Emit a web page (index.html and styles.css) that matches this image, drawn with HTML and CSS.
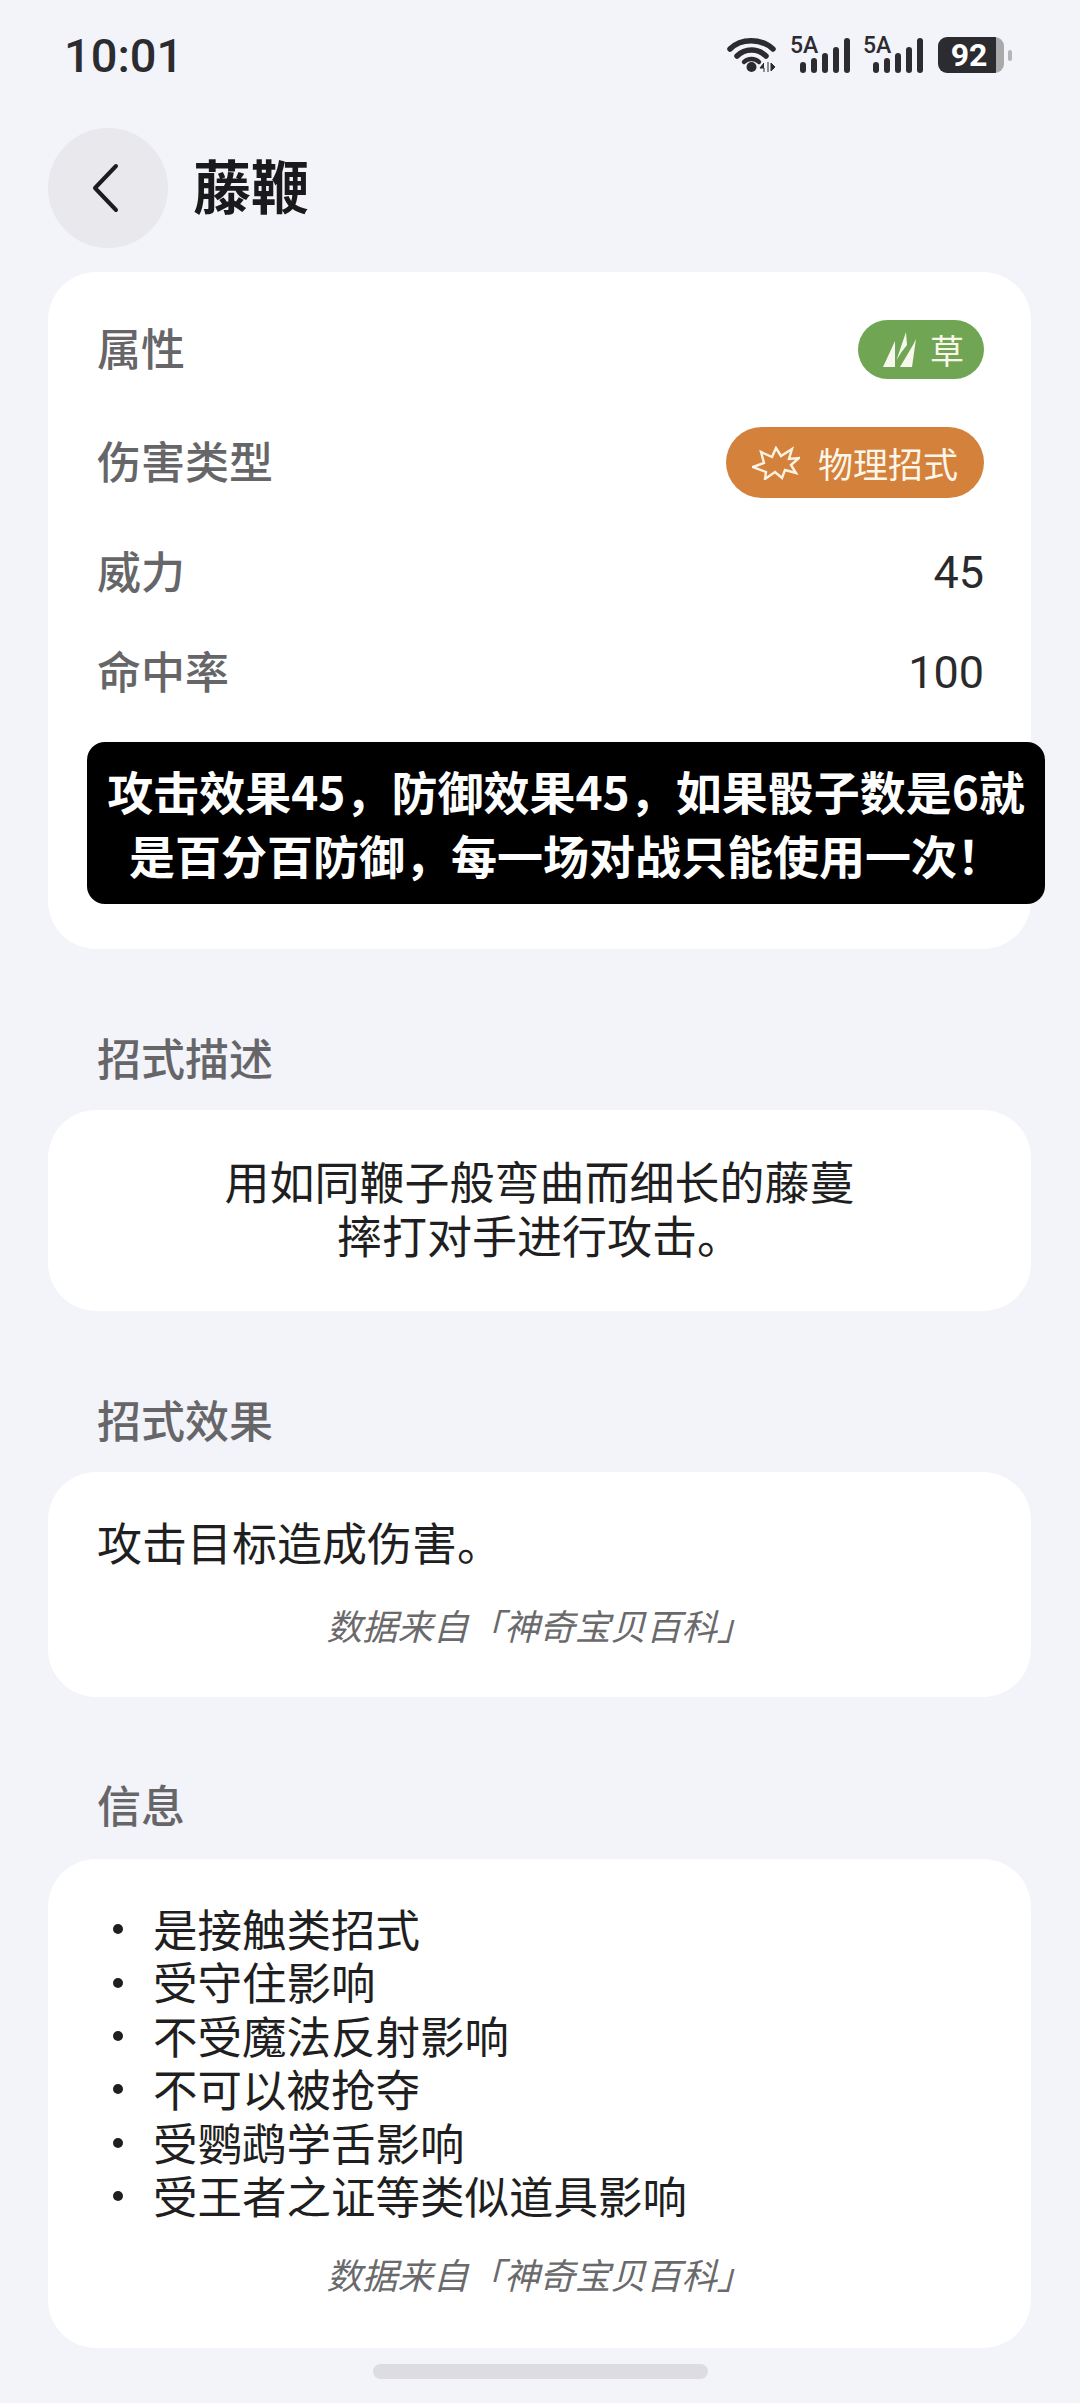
FILE: index.html
```html
<!DOCTYPE html>
<html lang="zh-Hans">
<head>
  <meta charset="UTF-8">
  <meta name="viewport" content="width=device-width, initial-scale=1.0">
  <title>藤鞭</title>
  <link rel="stylesheet" href="styles.css">
</head>
<body>

  <div class="status-bar">
    <span class="time">10:01</span>
    <div class="status-icons">
      <svg class="wifi" width="50" height="36" viewBox="0 0 50 36">
        <path d="M3 12 C14 1 34 1 46 12" fill="none" stroke="#2b2b30" stroke-width="5.5" stroke-linecap="round"/>
        <path d="M10 19 C18 11 31 11 39 19" fill="none" stroke="#2b2b30" stroke-width="5.5" stroke-linecap="round"/>
        <path d="M17 25 C21 21 28 21 32 25" fill="none" stroke="#2b2b30" stroke-width="4.5" stroke-linecap="round"/>
        <circle cx="24.5" cy="30" r="5" fill="#2b2b30"/>
        <path d="M37 26 L33 31 H37 V35 M41 25 V35 M44 26 L48 30 L44 34 Z" fill="#2b2b30" stroke="#2b2b30" stroke-width="1"/>
      </svg>
      <div class="signal">
        <span class="signal-label">5A</span>
        <i class="bar b1"></i><i class="bar b2"></i><i class="bar b3"></i><i class="bar b4"></i><i class="bar b5"></i>
      </div>
      <div class="signal">
        <span class="signal-label">5A</span>
        <i class="bar b1"></i><i class="bar b2"></i><i class="bar b3"></i><i class="bar b4"></i><i class="bar b5"></i>
      </div>
      <div class="battery"><span class="battery-level">92</span></div>
      <i class="battery-nub"></i>
    </div>
  </div>

  <div class="header">
    <div class="back-btn">
      <svg width="32" height="50" viewBox="0 0 32 50">
        <path d="M26 3 L5 25 L26 47" fill="none" stroke="#1c1c20" stroke-width="4" stroke-linecap="round" stroke-linejoin="round"/>
      </svg>
    </div>
    <h1>藤鞭</h1>
  </div>

  <div class="card card-stats">
    <div class="row row-type">
      <span class="row-label">属性</span>
      <span class="pill pill-grass">
        <svg width="34" height="36" viewBox="0 0 34 36">
          <path d="M0 35 L12 9 L12 35 Z M13.5 28 L23 0 L24 13 Q18 20 13.5 28 Z M17 35 L30 13 L33 7 L29 35 Z" fill="#f7f7ee"/>
        </svg>
        草
      </span>
    </div>
    <div class="row row-damage">
      <span class="row-label">伤害类型</span>
      <span class="pill pill-physical">
        <svg width="48" height="34" viewBox="0 0 48 34">
          <path d="M1 21 L12 17 L9 6 L20 11 L24 2 L29 10 L40 3 L37 13 L47 12 L39 19 L44 27 L33 24 L30 32 L23 26 L13 33 L14 26 Z" fill="none" stroke="#fbf3e2" stroke-width="2.4" stroke-linejoin="miter"/>
        </svg>
        物理招式
      </span>
    </div>
    <div class="row row-power">
      <span class="row-label">威力</span>
      <span class="row-value">45</span>
    </div>
    <div class="row row-accuracy">
      <span class="row-label">命中率</span>
      <span class="row-value">100</span>
    </div>
    <div class="caption">
      攻击效果45，防御效果45，如果骰子数是6就<br>是百分百防御，每一场对战只能使用一次！
    </div>
  </div>

  <div class="section-title">招式描述</div>
  <div class="card card-desc">
    用如同鞭子般弯曲而细长的藤蔓<br>摔打对手进行攻击。
  </div>

  <div class="section-title">招式效果</div>
  <div class="card card-effect">
    <div class="effect-text">攻击目标造成伤害。</div>
    <div class="source">数据来自「神奇宝贝百科」</div>
  </div>

  <div class="section-title section-info">信息</div>
  <div class="card card-info">
    <ul class="info-list">
      <li>是接触类招式</li>
      <li>受守住影响</li>
      <li>不受魔法反射影响</li>
      <li>不可以被抢夺</li>
      <li>受鹦鹉学舌影响</li>
      <li>受王者之证等类似道具影响</li>
    </ul>
    <div class="source">数据来自「神奇宝贝百科」</div>
  </div>

  <div class="home-bar"></div>

</body>
</html>
```

FILE: styles.css
```css
body {
  margin: 0;
  width: 1080px;
  height: 2403px;
  overflow: hidden;
  background-color: #f3f3fa;
  color: #1f1f22;
  font-family: "Noto Sans CJK SC", sans-serif;
  font-size: 44px;
}
.status-bar {
  height: 110px;
  padding: 0 68px 0 64px;
  display: flex;
  justify-content: space-between;
  align-items: center;
}
.time {
  font-family: Roboto, sans-serif;
  font-size: 47px;
  font-weight: 500;
  color: #2b2b30;
}
.status-icons {
  display: flex;
  align-items: flex-end;
  height: 36px;
}
.wifi {
  margin-right: 13px;
}
.signal {
  position: relative;
  width: 60px;
  height: 36px;
  margin-right: 13px;
  display: flex;
  align-items: flex-end;
  justify-content: flex-end;
  gap: 5px;
}
.signal-label {
  position: absolute;
  left: 0;
  top: -2px;
  font-family: Roboto, sans-serif;
  font-size: 23px;
  font-weight: 500;
  line-height: 22px;
  color: #2b2b30;
}
.bar {
  width: 6px;
  border-radius: 3px;
  background-color: #2b2b30;
}
.b1 { height: 11px; }
.b2 { height: 15px; }
.b3 { height: 20px; }
.b4 { height: 26px; }
.b5 { height: 35px; }
.battery {
  width: 66px;
  height: 36px;
  margin-left: 2px;
  border-radius: 9px;
  background: linear-gradient(to right, #2b2b30 88%, #a9a9ab 88%);
  display: flex;
  align-items: center;
  justify-content: center;
  padding-right: 4px;
  box-sizing: border-box;
}
.battery-level {
  font-family: Roboto, sans-serif;
  font-size: 32px;
  font-weight: 700;
  color: #fff;
}
.battery-nub {
  width: 4px;
  height: 11px;
  margin: 0 0 12px 4px;
  border-radius: 2px;
  background-color: #b5b5b8;
}
.header {
  height: 120px;
  margin: 18px 0 24px 48px;
  display: flex;
  align-items: center;
}
.back-btn {
  width: 120px;
  height: 120px;
  border-radius: 50%;
  background-color: #e8e8ed;
  display: flex;
  align-items: center;
  justify-content: center;
  padding-right: 4px;
  box-sizing: border-box;
}
h1 {
  margin: 0 0 0 25px;
  padding-bottom: 8px;
  font-size: 58px;
  font-weight: 700;
  color: #1a1a1c;
}
.card {
  margin: 0 49px 0 48px;
  background-color: white;
  border-radius: 48px;
  box-sizing: border-box;
}
.card-stats {
  position: relative;
  height: 677px;
  padding: 48px 47px 0 49px;
}
.row {
  display: flex;
  justify-content: space-between;
  align-items: center;
}
.row-damage { margin-top: 48px; }
.row-power {
  height: 60px;
  margin-top: 44px;
}
.row-accuracy {
  height: 60px;
  margin-top: 40px;
}
.row-label {
  padding-bottom: 5px;
  color: #666669;
  font-weight: 500;
  line-height: 50px;
}
.row-value {
  padding-top: 2px;
  font-family: Roboto, sans-serif;
  font-size: 45px;
  color: #2a2a2d;
  line-height: 50px;
}
.pill {
  display: flex;
  align-items: center;
  box-sizing: border-box;
  color: #fbf6ea;
  border-radius: 36px;
}
.pill-grass {
  height: 59px;
  width: 126px;
  padding-left: 25px;
  gap: 13px;
  font-size: 34px;
  background-color: #6fa553;
}
.pill-physical {
  height: 71px;
  width: 258px;
  padding-left: 26px;
  gap: 18px;
  font-size: 35px;
  background-color: #d4813c;
}
.caption {
  position: absolute;
  left: 39px;
  top: 470px;
  width: 958px;
  height: 162px;
  padding-bottom: 3px;
  box-sizing: border-box;
  border-radius: 18px;
  background-color: black;
  color: white;
  font-size: 46px;
  font-weight: 700;
  line-height: 64px;
  text-align: center;
  display: flex;
  align-items: center;
  justify-content: center;
}
.section-title {
  margin: 78px 0 23px 97px;
  color: #666669;
  font-weight: 500;
  line-height: 60px;
}
.section-info {
  margin-top: 77px;
  margin-bottom: 25px;
}
.card-desc {
  height: 201px;
  padding-top: 44px;
  font-size: 45px;
  line-height: 54px;
  text-align: center;
}
.card-effect {
  height: 225px;
  padding: 40px 49px 0;
}
.effect-text {
  font-size: 45px;
  line-height: 60px;
}
.source {
  margin-top: 31px;
  color: #6a6a6d;
  font-size: 35.5px;
  font-style: italic;
  line-height: 44px;
  text-align: center;
}
.card-info {
  height: 489px;
  padding: 42px 49px 0 65px;
}
.info-list {
  margin: 0;
  padding: 0;
  list-style: none;
  font-size: 44.5px;
  line-height: 53.4px;
}
.info-list li {
  display: flex;
  align-items: center;
  gap: 30px;
}
.info-list li::before {
  content: "";
  width: 10px;
  height: 10px;
  margin-top: 3px;
  border-radius: 50%;
  background-color: #1f1f22;
}
.card-info .source {
  margin-left: -16px;
}
.home-bar {
  width: 335px;
  height: 15px;
  margin: 16px auto 0;
  border-radius: 8px;
  background-color: #dcdce2;
}
```
